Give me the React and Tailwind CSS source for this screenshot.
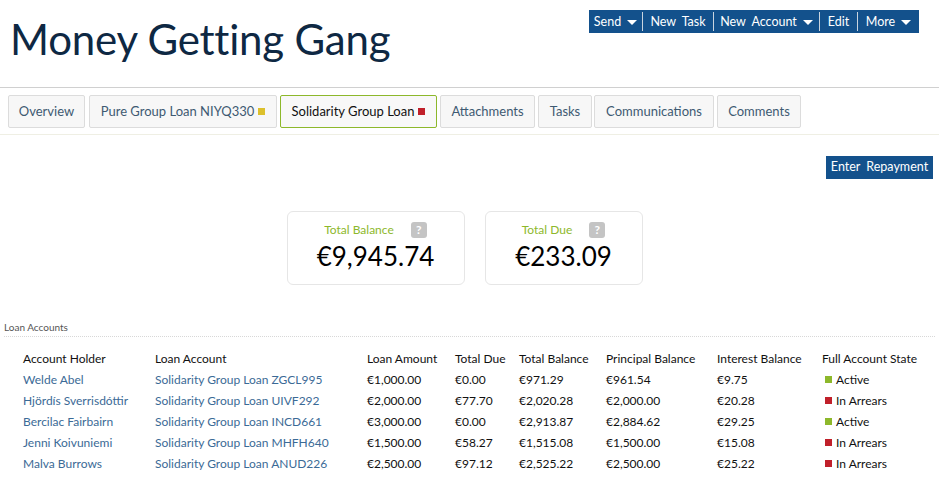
import React from "react";

const rows = [
  ["Welde Abel", "Solidarity Group Loan ZGCL995", "€1,000.00", "€0.00", "€971.29", "€961.54", "€9.75", "Active"],
  ["Hjördís Sverrisdóttir", "Solidarity Group Loan UIVF292", "€2,000.00", "€77.70", "€2,020.28", "€2,000.00", "€20.28", "In Arrears"],
  ["Bercilac Fairbairn", "Solidarity Group Loan INCD661", "€3,000.00", "€0.00", "€2,913.87", "€2,884.62", "€29.25", "Active"],
  ["Jenni Koivuniemi", "Solidarity Group Loan MHFH640", "€1,500.00", "€58.27", "€1,515.08", "€1,500.00", "€15.08", "In Arrears"],
  ["Malva Burrows", "Solidarity Group Loan ANUD226", "€2,500.00", "€97.12", "€2,525.22", "€2,500.00", "€25.22", "In Arrears"],
];

const cols = "grid grid-cols-[132px_212px_88px_64px_87px_111px_105px_1fr]";

function Caret() {
  return <span className="inline-block ml-[6px] w-0 h-0 border-l-[5px] border-r-[5px] border-t-[5px] border-l-transparent border-r-transparent border-t-white align-middle" />;
}

function Tab({ children, active, w, ml }) {
  return (
    <div
      className={
        "h-[33px] flex items-center justify-center rounded-[2px] border text-[13px] " +
        (active ? "border-[#8db82b] text-[#111] bg-[#f8f8f8]" : "border-[#dcdcdc] text-[#3e5a72] bg-[#f7f7f7]")
      }
      style={{ width: w, marginLeft: ml }}
    >
      {children}
    </div>
  );
}

function Card({ label, value, w }) {
  return (
    <div className="h-[74px] rounded-[6px] border border-[#e6e6e6] flex flex-col items-center pt-[9px]" style={{ width: w }}>
      <div className="flex items-center gap-[17px] h-[17px]">
        <span className="text-[12px] text-[#8db82b]">{label}</span>
        <span className="w-[16px] h-[16px] rounded-[3px] bg-[#c4c4c4] text-white text-[12px] font-bold flex items-center justify-center leading-none">?</span>
      </div>
      <div className="text-[26px] text-black leading-[32px] mt-[2px]">{value}</div>
    </div>
  );
}

function Seg({ w, children, last }) {
  return (
    <div className={"h-[19px] pt-[1px] flex items-center justify-center " + (last ? "" : "border-r border-[#c9d4df]")} style={{ width: w }}>
      {children}
    </div>
  );
}

export default function App() {
  return (
    <div className="w-[939px] h-[477px] bg-white overflow-hidden font-['Lato',sans-serif]">
      <div className="h-[88px] border-b border-[#d0d0d0] flex justify-between">
        <h1 className="ml-[10px] mt-[12px] text-[42px] leading-[54px] text-[#0e2843] tracking-[-0.2px]">Money Getting Gang</h1>
        <div className="mt-[10px] mr-[20px] h-[23px] bg-[#13518c] flex items-center text-white text-[12.5px] [word-spacing:3px]">
          <Seg w={54}>Send<Caret /></Seg>
          <Seg w={71}>New Task</Seg>
          <Seg w={106}>New Account<Caret /></Seg>
          <Seg w={38}>Edit</Seg>
          <Seg w={61} last>More<Caret /></Seg>
        </div>
      </div>

      <div className="pt-[7px] pb-[6px] border-b border-[#efefe4] flex">
        <Tab w={77} ml={8}>Overview</Tab>
        <Tab w={188} ml={4}>Pure Group Loan NIYQ330<span className="ml-[4px] w-[7px] h-[7px] bg-[#dcc02c]" /></Tab>
        <Tab w={157} ml={3} active>Solidarity Group Loan<span className="ml-[4px] w-[7px] h-[7px] bg-[#c0202a]" /></Tab>
        <Tab w={95} ml={3}>Attachments</Tab>
        <Tab w={54} ml={3}>Tasks</Tab>
        <Tab w={120} ml={2}>Communications</Tab>
        <Tab w={84} ml={3}>Comments</Tab>
      </div>

      <div className="flex justify-end pr-[6px] pt-[21px]">
        <div className="h-[23px] w-[107px] bg-[#13518c] text-white text-[12.5px] flex items-center justify-center [word-spacing:3px]">Enter Repayment</div>
      </div>

      <div className="flex justify-center gap-[20px] mt-[32px] pr-[10px]">
        <Card label="Total Balance" value="€9,945.74" w={178} />
        <Card label="Total Due" value="€233.09" w={158} />
      </div>

      <div className="mt-[36px] mx-[4px] text-[10px] text-[#555] leading-[13px] pb-[2px] border-b border-dotted border-[#d8d8d8]">Loan Accounts</div>

      <div className="pl-[23px] mt-[11px] text-[12px] leading-[21px]">
        <div className={cols + " text-[#111]"}>
          <div>Account Holder</div>
          <div>Loan Account</div>
          <div>Loan Amount</div>
          <div>Total Due</div>
          <div>Total Balance</div>
          <div>Principal Balance</div>
          <div>Interest Balance</div>
          <div>Full Account State</div>
        </div>
        {rows.map((r) => (
          <div key={r[1]} className={cols + " text-[#111]"}>
            <div className="text-[#3b6a96]">{r[0]}</div>
            <div className="text-[#3b6a96]">{r[1]}</div>
            <div>{r[2]}</div>
            <div>{r[3]}</div>
            <div>{r[4]}</div>
            <div>{r[5]}</div>
            <div>{r[6]}</div>
            <div className="flex items-center">
              <span className={"ml-[3px] mr-[4px] w-[7px] h-[7px] " + (r[7] === "Active" ? "bg-[#8db82b]" : "bg-[#c0202a]")} />
              {r[7]}
            </div>
          </div>
        ))}
      </div>
    </div>
  );
}
